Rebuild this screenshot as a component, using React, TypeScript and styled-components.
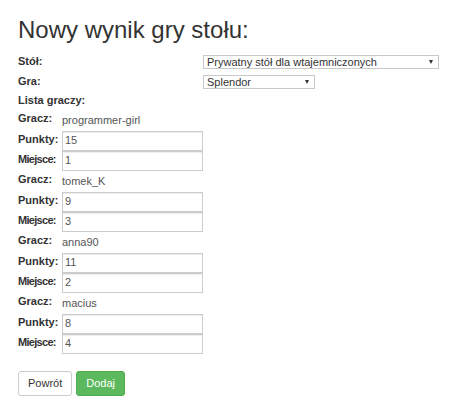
import styled, { createGlobalStyle } from 'styled-components';

const GlobalStyle = createGlobalStyle`
  * {
    box-sizing: border-box;
  }
  body {
    margin: 0;
    background: #fff;
    color: #333;
    font-family: "Liberation Sans", Arial, Helvetica, sans-serif;
    font-size: 11px;
  }
`;

const players = [
  { name: 'programmer-girl', points: '15', place: '1' },
  { name: 'tomek_K', points: '9', place: '3' },
  { name: 'anna90', points: '11', place: '2' },
  { name: 'macius', points: '8', place: '4' },
];

export default function App() {
  return (
    <>
      <GlobalStyle />
      <Page>
        <Title>Nowy wynik gry stołu:</Title>

        <TopGrid>
          <FieldLabel>Stół:</FieldLabel>
          <SelectWrap $width={236}>
            <Select defaultValue="private">
              <option value="private">Prywatny stół dla wtajemniczonych</option>
            </Select>
            <Caret />
          </SelectWrap>

          <FieldLabel>Gra:</FieldLabel>
          <SelectWrap $width={112}>
            <Select defaultValue="splendor">
              <option value="splendor">Splendor</option>
            </Select>
            <Caret />
          </SelectWrap>

          <FieldLabel $wide>Lista graczy:</FieldLabel>
        </TopGrid>

        <PlayerList>
          {players.map((player) => (
            <PlayerBlock key={player.name}>
              <PlayerLabel $top>Gracz:</PlayerLabel>
              <PlayerName>{player.name}</PlayerName>

              <PlayerLabel>Punkty:</PlayerLabel>
              <NumberInput defaultValue={player.points} />

              <PlayerLabel $condensed>Miejsce:</PlayerLabel>
              <NumberInput defaultValue={player.place} />
            </PlayerBlock>
          ))}
        </PlayerList>

        <Actions>
          <Button type="button">Powrót</Button>
          <Button type="submit" $variant="success">
            Dodaj
          </Button>
        </Actions>
      </Page>
    </>
  );
}

const Page = styled.div`
  padding: 17px 18px 0;
`;

const Title = styled.h3`
  margin: 0;
  font-size: 24px;
  font-weight: 400;
  line-height: 26px;
  color: #333;
`;

const TopGrid = styled.div`
  display: grid;
  grid-template-columns: 185px auto;
  grid-template-rows: 20px 20px 19px;
  margin-top: 8px;
`;

const FieldLabel = styled.div<{ $wide?: boolean }>`
  grid-column: ${({ $wide }) => ($wide ? '1 / -1' : 'auto')};
  font-weight: 700;
  line-height: ${({ $wide }) => ($wide ? '19px' : '20px')};
  white-space: nowrap;
`;

const SelectWrap = styled.div<{ $width: number }>`
  position: relative;
  align-self: start;
  width: ${({ $width }) => $width}px;
  height: 14px;
  margin-top: 4px;
`;

const Select = styled.select`
  appearance: none;
  display: block;
  width: 100%;
  height: 100%;
  margin: 0;
  padding: 0 16px 0 3px;
  border: 1px solid #c9c9c9;
  border-radius: 0;
  background: #fff;
  color: #333;
  font-family: inherit;
  font-size: 11px;
  line-height: 12px;
  outline: none;
`;

const Caret = styled.span`
  position: absolute;
  top: 5px;
  right: 6px;
  width: 0;
  height: 0;
  border-left: 2.5px solid transparent;
  border-right: 2.5px solid transparent;
  border-top: 4px solid #333;
  pointer-events: none;
`;

const PlayerList = styled.div`
  display: flex;
  flex-direction: column;
`;

const PlayerBlock = styled.div`
  display: grid;
  grid-template-columns: 44px 141px;
  grid-template-rows: 21px 20px 20px;
`;

const PlayerLabel = styled.div<{ $top?: boolean; $condensed?: boolean }>`
  padding-top: ${({ $top }) => ($top ? '1px' : '0')};
  font-weight: 700;
  line-height: ${({ $top }) => ($top ? '15px' : '17px')};
  letter-spacing: ${({ $condensed }) => ($condensed ? '-0.7px' : 'normal')};
  white-space: nowrap;
`;

const PlayerName = styled.div`
  color: #555;
  line-height: 21px;
`;

const NumberInput = styled.input.attrs({ type: 'text' })`
  display: block;
  width: 100%;
  height: 20px;
  margin: 0;
  padding: 0 2px 3px;
  border: 1px solid #ccc;
  border-radius: 0;
  box-shadow: inset 0 1px 1px rgba(0, 0, 0, 0.075);
  background: #fff;
  color: #555;
  font-family: inherit;
  font-size: 11px;
  line-height: 14px;
  outline: none;
`;

const Actions = styled.div`
  display: flex;
  gap: 4px;
  margin-top: 17px;
`;

const Button = styled.button<{ $variant?: 'success' }>`
  height: 25px;
  margin: 0;
  padding: 0 9px;
  border: 1px solid ${({ $variant }) => ($variant === 'success' ? '#4cae4c' : '#ccc')};
  border-radius: 3px;
  background: ${({ $variant }) => ($variant === 'success' ? '#5cb85c' : '#fff')};
  color: ${({ $variant }) => ($variant === 'success' ? '#fff' : '#333')};
  font-family: inherit;
  font-size: 11px;
  line-height: 23px;
  cursor: pointer;
`;
